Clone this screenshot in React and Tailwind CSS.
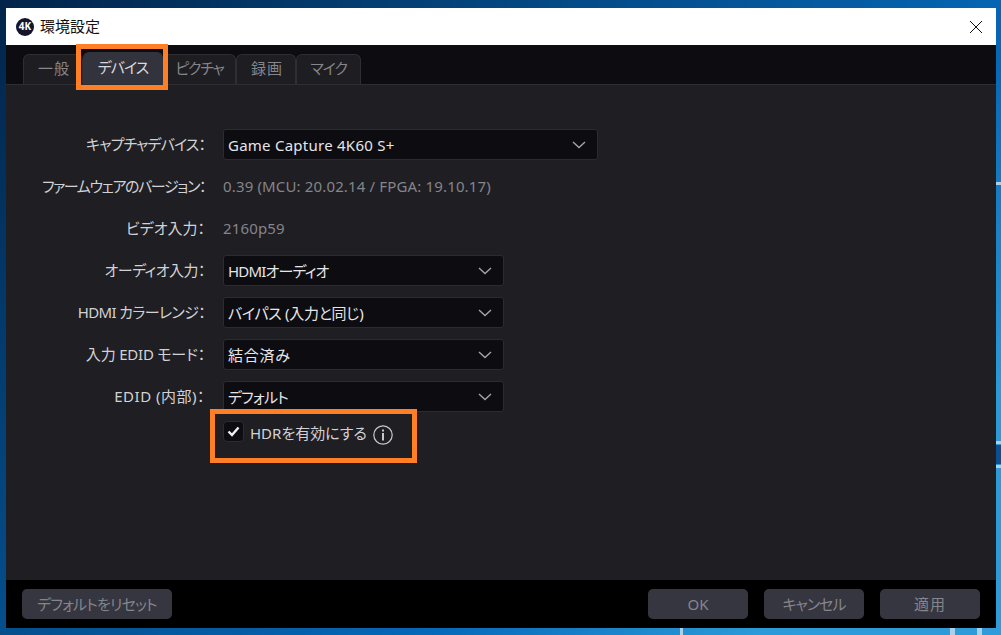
import React from "react";

const font = { fontFamily: '"Noto Sans", "Noto Sans CJK JP", sans-serif' };

function Chevron() {
  return (
    <svg width="14" height="8" viewBox="0 0 14 8" fill="none" className="shrink-0">
      <path d="M1 1 L7 6.5 L13 1" stroke="#a3a3a8" strokeWidth="1.4" />
    </svg>
  );
}

function Select({ value, wide, track = "" }) {
  return (
    <div className={`h-[31px] ${wide ? "w-[375px]" : "w-[281px]"} flex items-center justify-between pl-[4px] pr-[11px] bg-[#0c0c11] border border-[#2b2b30] rounded-[3px] text-[15px] text-[#e6e6e8]`}>
      <span className={`pt-[1px] ${track}`}>{value}</span>
      <Chevron />
    </div>
  );
}

function Row({ label, track = "", children }) {
  return (
    <div className="h-[31px] flex items-center">
      <div className={`w-[171px] shrink-0 flex justify-end text-[15px] text-[#d2d2d5] whitespace-nowrap ${track}`}>{label}</div>
      <div className="w-[18px] shrink-0" />
      {children}
    </div>
  );
}

function Tab({ children, width, active, track = "" }) {
  return (
    <div
      className={`flex items-center justify-center pb-[2px] text-[15px] border border-b-0 rounded-t-[6px] ${track} ${
        active
          ? "h-[32px] bg-[#33333d] border-[#33333d] text-[#d8d8dc]"
          : "h-[30px] bg-[#1d1d22] border-[#2e2e33] text-[#85858a]"
      }`}
      style={{ width }}
    >
      {children}
    </div>
  );
}

function FootBtn({ children, className }) {
  return (
    <div className={`h-[30px] flex items-center justify-center rounded-[5px] bg-[#363640] text-[15px] text-[#85858c] ${className}`}>
      {children}
    </div>
  );
}

function Speck({ className }) {
  return <div className={`absolute bg-[#a9d2ea] ${className}`} />;
}

export default function App() {
  return (
    <div
      className="relative w-[1001px] h-[635px] overflow-hidden pt-[8px] pl-[6px] [font-feature-settings:'palt'] bg-[linear-gradient(135deg,#02244a_0%,#04508f_40%,#0668b8_65%,#2b9ad8_85%,#2f9bd9_100%)]"
      style={font}
    >
      <div className="w-[990px] h-[620px] flex flex-col bg-black">
        <div className="h-[37px] shrink-0 bg-white flex items-center justify-between pl-[10px] pr-[13px]">
          <div className="flex items-center gap-[6px]">
            <div className="w-[18px] h-[18px] rounded-full bg-[#14142a] flex items-center justify-center text-[10px] font-bold text-white">4K</div>
            <span className="text-[15px] text-[#111]">環境設定</span>
          </div>
          <svg width="14" height="14" viewBox="0 0 14 14" fill="none">
            <path d="M1 1 L13 13 M13 1 L1 13" stroke="#111" strokeWidth="1" />
          </svg>
        </div>

        <div className="h-[40px] shrink-0 bg-[#0c0c11] flex items-end pl-[17px] gap-0 border-b border-[#2e2e33]">
          <Tab width={60} track="pl-[2px] tracking-[1px]">一般</Tab>
          <Tab width={80} active track="tracking-[-1px]">デバイス</Tab>
          <Tab width={73} track="tracking-[-1.2px]">ピクチャ</Tab>
          <Tab width={60} track="pl-[2px] tracking-[1px]">録画</Tab>
          <Tab width={65} track="tracking-[-1.2px]">マイク</Tab>
        </div>

        <div className="flex-1 bg-[#1e1e23] pt-[44px] pl-[28px] flex flex-col gap-[11px]">
          <Row label="キャプチャデバイス：" track="tracking-[-0.9px]"><Select value="Game Capture 4K60 S+" wide track="tracking-[0.25px]" /></Row>
          <Row label="ファームウェアのバージョン：" track="tracking-[-1.4px]"><span className="text-[15px] text-[#85858a] tracking-[0.15px]">0.39 (MCU: 20.02.14 / FPGA: 19.10.17)</span></Row>
          <Row label="ビデオ入力："><span className="text-[15px] text-[#85858a] tracking-[0.15px]">2160p59</span></Row>
          <Row label="オーディオ入力：" track="tracking-[-0.5px]"><Select value="HDMIオーディオ" track="tracking-[-0.8px]" /></Row>
          <Row label="HDMI カラーレンジ：" track="tracking-[-0.65px]"><Select value="バイパス (入力と同じ)" track="tracking-[-0.3px]" /></Row>
          <Row label="入力 EDID モード：" track="tracking-[-0.2px]"><Select value="結合済み" track="tracking-[0.8px]" /></Row>
          <Row label="EDID (内部)：" track="tracking-[0.5px]"><Select value="デフォルト" track="tracking-[-0.8px]" /></Row>
          <div className="flex items-start pl-[189px] -mt-[2px] h-[22px]">
            <div className="w-[21px] h-[21px] rounded-[4px] bg-[#0c0c11] border border-[#2b2b30] flex items-center justify-center">
              <svg width="13" height="11" viewBox="0 0 13 11" fill="none">
                <path d="M1.5 5.5 L5 9 L11.5 1.5" stroke="#f0f0f0" strokeWidth="2.4" />
              </svg>
            </div>
            <span className="ml-[6px] mt-[1px] text-[15px] text-[#d2d2d5]">HDRを有効にする</span>
            <svg className="ml-[6px] mt-[4px]" width="20" height="20" viewBox="0 0 20 20" fill="none">
              <circle cx="10" cy="10" r="9.2" stroke="#c8c8cc" strokeWidth="1.2" />
              <rect x="9" y="8" width="2" height="7.5" fill="#c8c8cc" />
              <rect x="9" y="4.5" width="2" height="2" fill="#c8c8cc" />
            </svg>
          </div>
        </div>

        <div className="h-[48px] shrink-0 bg-black flex items-center justify-between pl-[16px] pr-[16px]">
          <FootBtn className="w-[150px] tracking-[-0.8px]">デフォルトをリセット</FootBtn>
          <div className="flex gap-[16px]">
            <FootBtn className="w-[100px]">OK</FootBtn>
            <FootBtn className="w-[100px] tracking-[-1px]">キャンセル</FootBtn>
            <FootBtn className="w-[100px] tracking-[1px]">適用</FootBtn>
          </div>
        </div>
      </div>

      <Speck className="left-[996px] top-[182px] w-[5px] h-[3px]" />
      <Speck className="left-[996px] top-[441px] w-[5px] h-[3px]" />
      <div className="absolute left-[996px] top-[445px] w-[5px] h-[19px] bg-[#0a4f92]" />
      <Speck className="left-[996px] top-[465px] w-[5px] h-[3px]" />
      <Speck className="left-[680px] top-[628px] w-[3px] h-[7px]" />
      <Speck className="left-[950px] top-[628px] w-[5px] h-[7px]" />
      <Speck className="left-[977px] top-[628px] w-[5px] h-[7px]" />

      <div className="absolute left-[76px] top-[44px] w-[92px] h-[46px] border-[5px] border-[#ff7f27]" />
      <div className="absolute left-[210px] top-[409px] w-[207px] h-[54px] border-[5px] border-[#ff7f27]" />
    </div>
  );
}
